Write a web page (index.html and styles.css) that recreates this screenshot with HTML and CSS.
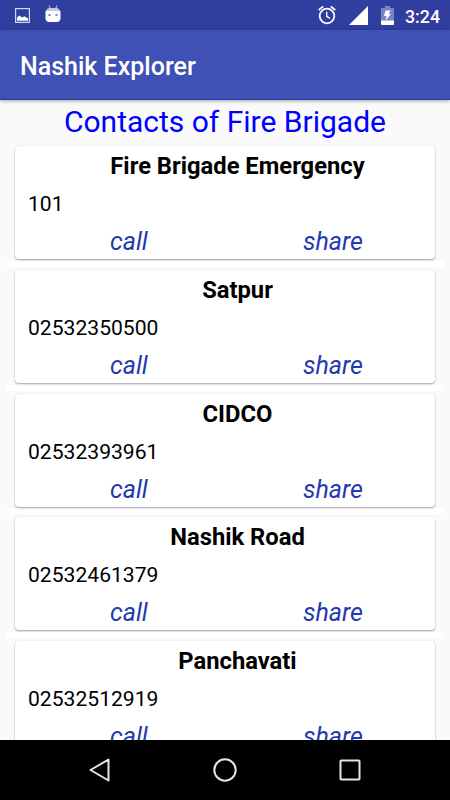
FILE: index.html
```html
<!DOCTYPE html>
<html lang="en">
<head>
  <meta charset="UTF-8">
  <title>Nashik Explorer</title>
  <meta name="viewport" content="width=device-width, initial-scale=1.0">
  <link rel="stylesheet" href="styles.css">
</head>
<body>

<div class="status-bar">
  <svg class="icon-picture" width="15" height="15" viewBox="0 0 15 15">
    <rect x=".6" y=".6" width="13.8" height="13.8" fill="none" stroke="#d6d9ef" stroke-width="1.2"/>
    <path d="M2 12.8V9.500l2.500-2 2.500 2 2.500-1.200L13 10.500v2.300z" fill="#fff"/>
  </svg>
  <svg class="icon-android" width="16" height="18" viewBox="0 0 16 18">
    <path d="M4 .5l1.300 3M12 .5l-1.300 3" stroke="#c5cae9" stroke-width="1"/>
    <path d="M1 6.500Q1.300 3 5 3h6q3.700 0 4 3.500z" fill="#c5cae9"/>
    <path d="M.5 6h15v7q0 4-4 4h-7q-4 0-4-4z" fill="#fff"/>
    <path d="M3.500 9h2v2h-2zM10.500 9h2v2h-2z" fill="#7780c2"/>
  </svg>
  <span class="space"></span>
  <svg class="icon-alarm" width="18" height="20" viewBox="0 0 18 20">
    <circle cx="9" cy="11" r="7.300" fill="none" stroke="#fff" stroke-width="1.800"/>
    <path d="M.8 5L5.200 1.400M17.200 5l-4.400-3.600" stroke="#fff" stroke-width="1.800"/>
    <path d="M8.700 6.800v4.600l3.300 2" fill="none" stroke="#fff" stroke-width="1.400"/>
  </svg>
  <svg class="icon-signal" width="19" height="19" viewBox="0 0 19 19">
    <path d="M19 0v19H0z" fill="#fff"/>
  </svg>
  <svg class="icon-battery" width="13" height="19" viewBox="0 0 13 19">
    <path d="M4 0h5v2h3q1 0 1 1v12H0V3q0-1 1-1h3z" fill="#7a83c4"/>
    <path d="M0 14.500h13V18q0 1-1 1H1q-1 0-1-1z" fill="#fff"/>
    <path d="M4.500 4.500h5L7.800 8H10l-5.500 6.500 1-4.500H3z" fill="#fff"/>
  </svg>
  <span class="time">3:24</span>
</div>

<div class="app-bar">Nashik Explorer</div>

<div class="content">
  <h1>Contacts of Fire Brigade</h1>

  <div class="item">
    <div class="card">
      <h2>Fire Brigade Emergency</h2>
      <p class="number">101</p>
      <div class="actions"><a>call</a><a>share</a></div>
    </div>
  </div>
  <div class="item">
    <div class="card">
      <h2>Satpur</h2>
      <p class="number">02532350500</p>
      <div class="actions"><a>call</a><a>share</a></div>
    </div>
  </div>
  <div class="item">
    <div class="card">
      <h2>CIDCO</h2>
      <p class="number">02532393961</p>
      <div class="actions"><a>call</a><a>share</a></div>
    </div>
  </div>
  <div class="item">
    <div class="card">
      <h2>Nashik Road</h2>
      <p class="number">02532461379</p>
      <div class="actions"><a>call</a><a>share</a></div>
    </div>
  </div>
  <div class="item">
    <div class="card">
      <h2>Panchavati</h2>
      <p class="number">02532512919</p>
      <div class="actions"><a>call</a><a>share</a></div>
    </div>
  </div>
</div>

<div class="nav-bar">
  <svg width="24" height="26" viewBox="0 0 24 26">
    <path d="M20.500 2.500v21L2.500 13z" fill="none" stroke="#e6e6e6" stroke-width="2" stroke-linejoin="round"/>
  </svg>
  <svg width="24" height="26" viewBox="0 0 24 26">
    <circle cx="12" cy="13" r="10.700" fill="none" stroke="#e6e6e6" stroke-width="2"/>
  </svg>
  <svg width="24" height="26" viewBox="0 0 24 26">
    <rect x="2.500" y="3.500" width="19" height="19" rx=".8" fill="none" stroke="#e6e6e6" stroke-width="2"/>
  </svg>
</div>

</body>
</html>
```
FILE: styles.css
```css
* { box-sizing: border-box; }
body {
  margin: 0;
  height: 800px;
  background: #fafafa;
  color: #000;
  font-family: Roboto, sans-serif;
  display: flex;
  flex-direction: column;
  overflow: hidden;
}
h1, h2, p { margin: 0; }
svg { display: block; flex: none; }
.status-bar {
  flex: none;
  height: 30px;
  padding: 0 10px 0 15px;
  background: #303f9f;
  color: #fff;
  display: flex;
  align-items: center;
}
.icon-android {
  margin: -2px 0 0 15px;
}
.space { flex: 1; }
.icon-signal { margin-left: 13px; }
.icon-battery { margin-left: 13px; }
.time {
  margin: 2px 0 0 11px;
  width: 35px;
  font-size: 17.8px;
  font-weight: 500;
  white-space: nowrap;
}
.app-bar {
  flex: none;
  height: 70px;
  padding: 1px 20px 0;
  background: #3f51b5;
  border-bottom: 1px solid #2439a4;
  box-shadow: 0 1px 4px rgba(0, 0, 0, 0.35);
  color: #fff;
  font-size: 25px;
  font-weight: 500;
  line-height: 71px;
  z-index: 1;
}
.content {
  flex: 1;
  min-height: 0;
  overflow: hidden;
}
h1 {
  height: 43px;
  color: #0000ff;
  font-size: 30px;
  font-weight: 400;
  line-height: 43px;
  text-align: center;
}
.item {
  height: 123.75px;
  margin: 0 6px;
  padding: 3px 9px 0;
  border-bottom: 6px solid #fff;
}
.card {
  height: 113px;
  padding: 5px 13px 0;
  border-radius: 4px;
  background: #fff;
  box-shadow: 0 1px 2px rgba(0, 0, 0, 0.35), 0 0 1px rgba(0, 0, 0, 0.15);
}
h2 {
  padding-left: 25px;
  font-size: 23.75px;
  font-weight: 700;
  line-height: 31px;
  text-align: center;
}
.number {
  font-size: 21.1px;
  line-height: 43px;
}
.actions {
  display: grid;
  grid-template-columns: 193px 1fr;
  padding-left: 82px;
  color: #2439b0;
  font-size: 25px;
  font-style: italic;
  line-height: 34px;
}
.nav-bar {
  flex: none;
  height: 60px;
  padding: 0 88px;
  background: #000;
  display: flex;
  justify-content: space-between;
  align-items: center;
}
```
